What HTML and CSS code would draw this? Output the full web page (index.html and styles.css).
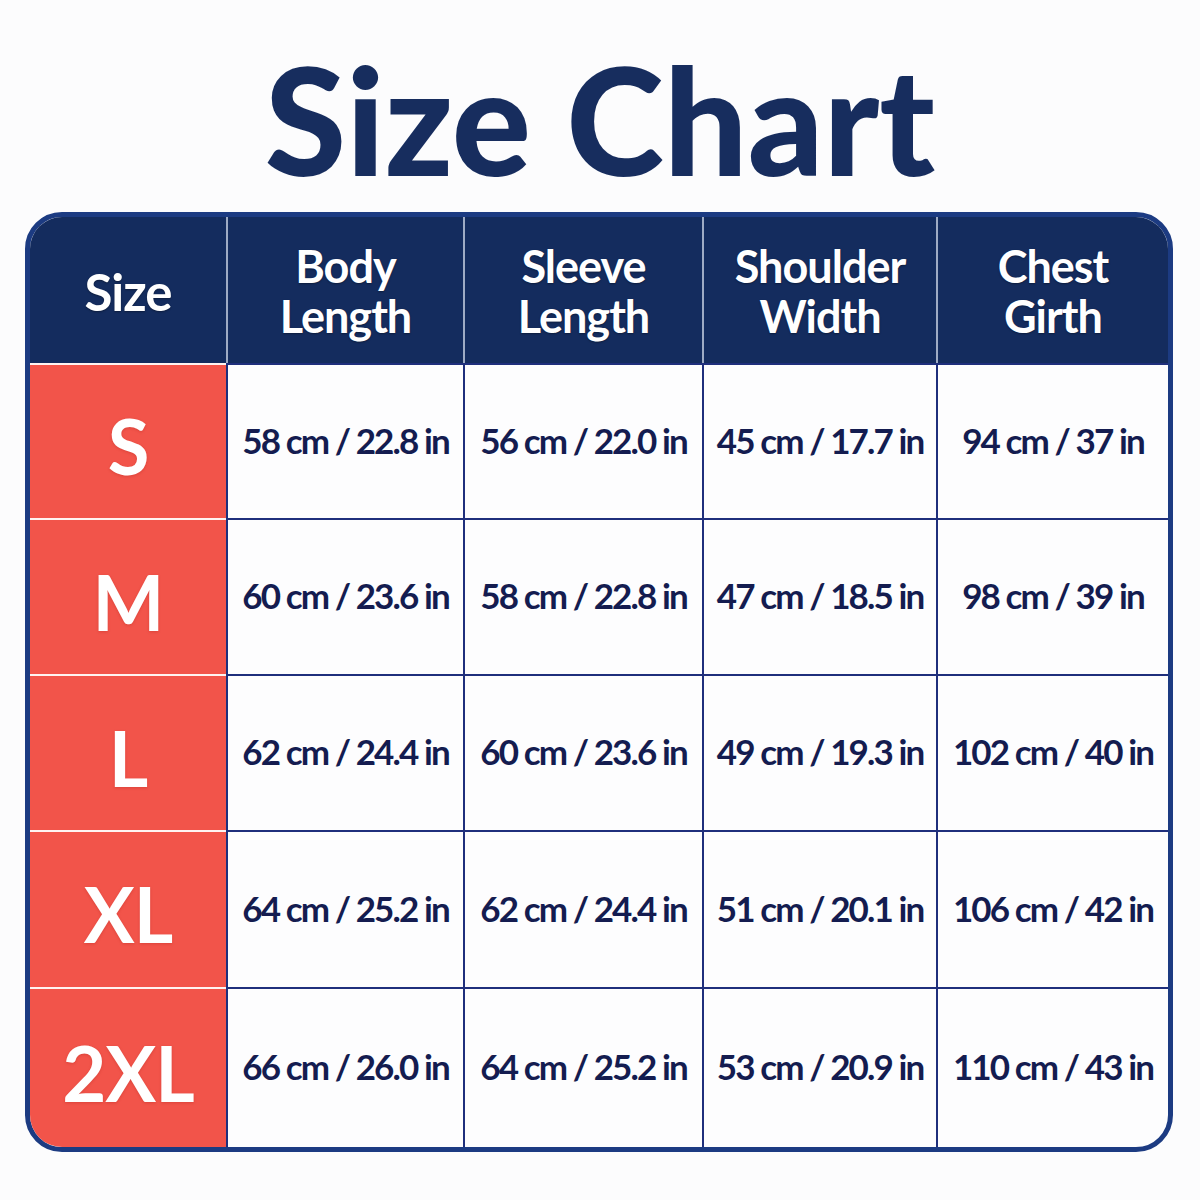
FILE: index.html
```html
<!DOCTYPE html>
<html>
<head>
<meta charset="utf-8">
<link rel="stylesheet" href="styles.css">
</head>
<body>
<main class="page">
  <h1 class="title">Size Chart</h1>
  <div class="chart">
    <div class="hd hd-size"><span>Size</span></div>
    <div class="hd"><span>Body</span><span>Length</span></div>
    <div class="hd"><span>Sleeve</span><span>Length</span></div>
    <div class="hd"><span>Shoulder</span><span>Width</span></div>
    <div class="hd"><span>Chest</span><span>Girth</span></div>

    <div class="sz">S</div>
    <div class="cell">58 cm / 22.8 in</div>
    <div class="cell">56 cm / 22.0 in</div>
    <div class="cell">45 cm / 17.7 in</div>
    <div class="cell">94 cm / 37 in</div>

    <div class="sz">M</div>
    <div class="cell">60 cm / 23.6 in</div>
    <div class="cell">58 cm / 22.8 in</div>
    <div class="cell">47 cm / 18.5 in</div>
    <div class="cell">98 cm / 39 in</div>

    <div class="sz">L</div>
    <div class="cell">62 cm / 24.4 in</div>
    <div class="cell">60 cm / 23.6 in</div>
    <div class="cell">49 cm / 19.3 in</div>
    <div class="cell">102 cm / 40 in</div>

    <div class="sz">XL</div>
    <div class="cell">64 cm / 25.2 in</div>
    <div class="cell">62 cm / 24.4 in</div>
    <div class="cell">51 cm / 20.1 in</div>
    <div class="cell">106 cm / 42 in</div>

    <div class="sz">2XL</div>
    <div class="cell">66 cm / 26.0 in</div>
    <div class="cell">64 cm / 25.2 in</div>
    <div class="cell">53 cm / 20.9 in</div>
    <div class="cell">110 cm / 43 in</div>
  </div>
</main>
</body>
</html>
```
FILE: styles.css
```css
* { box-sizing: border-box; }
html, body { margin: 0; padding: 0; }
body {
  background: #fcfcfd;
  font-family: "Lato", "Open Sans", sans-serif;
  width: 1200px;
  height: 1200px;
}
.page {
  padding: 45px 0 0 25px;
}
.title {
  margin: 0 0 19px -25px;
  font-size: 148px;
  line-height: 148px;
  height: 148px;
  font-weight: 900;
  color: #172d5e;
  text-align: center;
}
.chart {
  width: 1148px;
  height: 940px;
  border: 5px solid #1c3b82;
  border-radius: 37px;
  overflow: hidden;
  background: #fdfdfe;
  display: grid;
  grid-template-columns: 196px 237px 239px 234px 1fr;
  grid-template-rows: 146px 155px 156px 156px 157px 1fr;
}
.hd {
  background: #142c5e;
  color: #ffffff;
  font-weight: 700;
  font-size: 45px;
  line-height: 50px;
  letter-spacing: -1px;
  display: flex;
  flex-direction: column;
  align-items: center;
  justify-content: center;
  text-align: center;
  border-left: 2px solid #9eabc4;
  text-shadow: 0 1px 2px rgba(0, 0, 0, 0.35);
  padding-top: 2px;
}
.hd span {
  display: block;
  height: 50px;
}
.hd-size {
  border-left: none;
  font-size: 51px;
  padding-top: 4px;
}
.sz {
  background: #f2544a;
  color: #ffffff;
  font-weight: 700;
  font-size: 76px;
  letter-spacing: -1px;
  display: flex;
  align-items: center;
  justify-content: center;
  border-top: 2px solid #fff3f1;
  padding-top: 8px;
  text-shadow: 0 1px 3px rgba(150, 20, 10, 0.25);
}
.cell {
  color: #141c50;
  font-weight: 700;
  font-size: 35px;
  letter-spacing: -1.9px;
  display: flex;
  align-items: center;
  justify-content: center;
  white-space: nowrap;
  border-left: 2px solid #1f2f7c;
  border-top: 2px solid #1f2f7c;
  padding-bottom: 4px;
}
```
